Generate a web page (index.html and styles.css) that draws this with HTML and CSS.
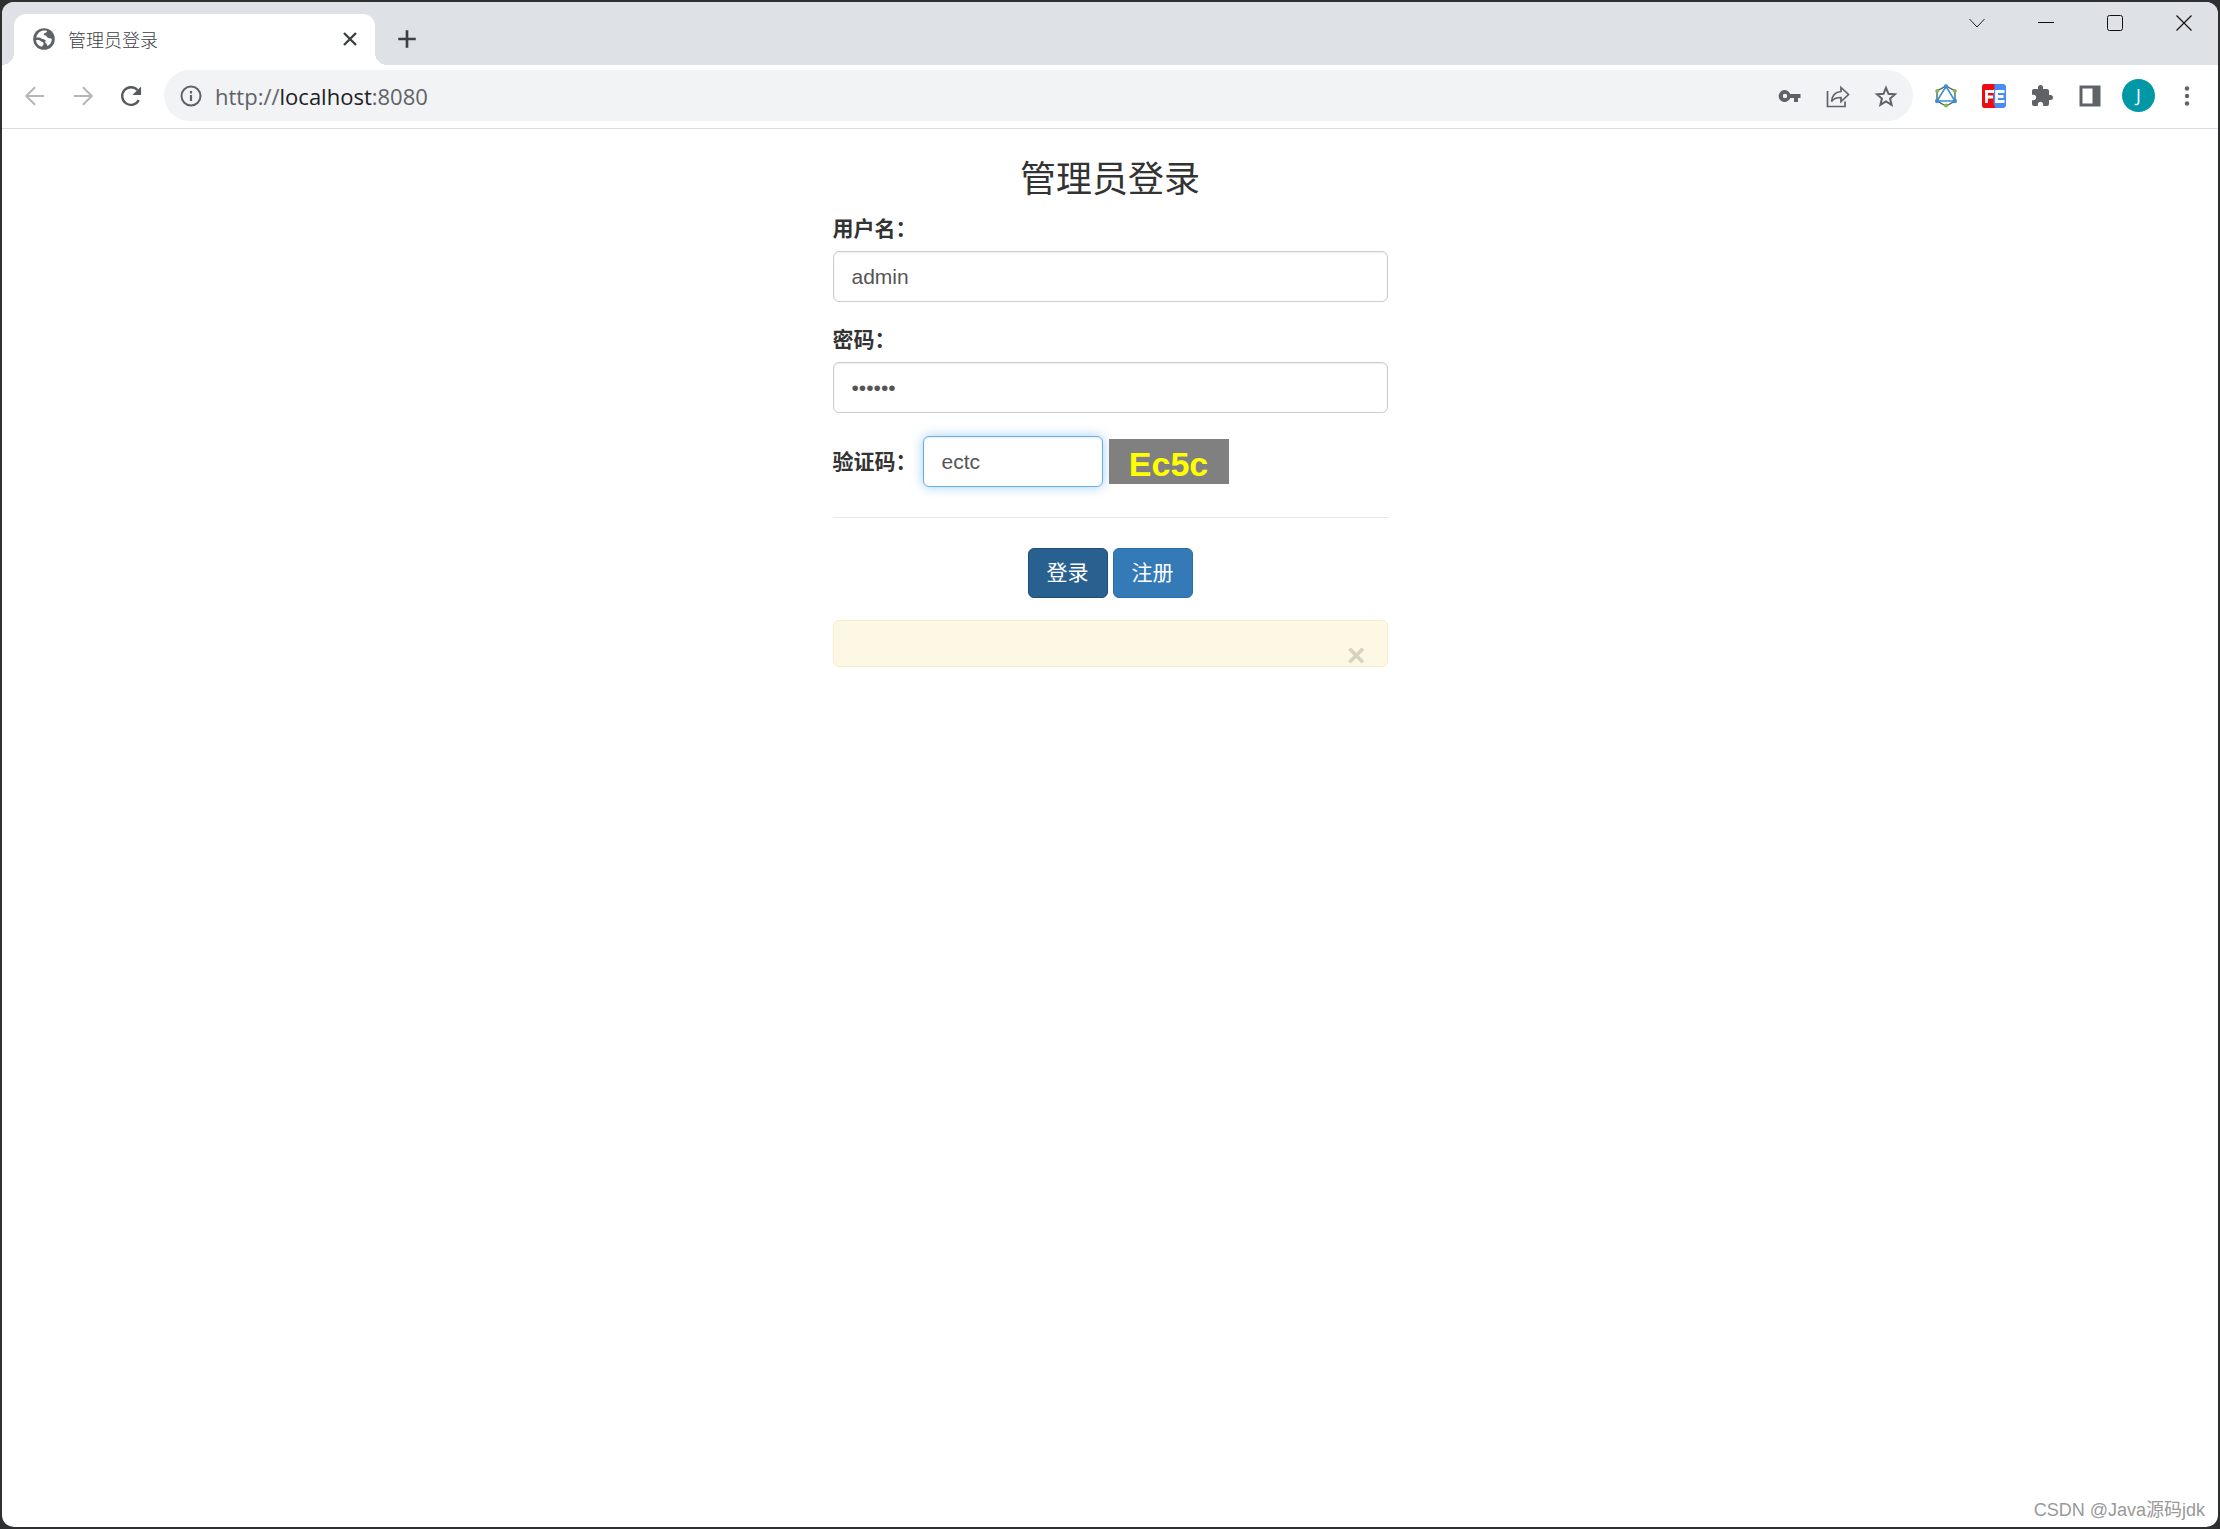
FILE: index.html
```html
<!DOCTYPE html>
<html lang="zh-CN">
<head>
<meta charset="utf-8">
<title>管理员登录</title>
<link rel="stylesheet" href="styles.css">
</head>
<body>
<div class="window">
  <header class="tabstrip">
    <div class="tab">
      <svg class="icon" viewBox="0 0 24 24" aria-hidden="true"><circle cx="12" cy="12" r="10.800" fill="#5f6368"/><path d="M9.500 4c1.800-.6 4-.6 5.500 0 .2 1.600-1.700 1.700-2.700 2.600-1 1-.2 2 1.200 2 1.500.1 1.200 1.800 2.300 2.200 1.400.4 2.700.2 4 1.200 0 3.200-1.600 5.600-4.300 6.900-.7-.8-.2-1.800-1.300-2.500-1.200-.7-1.100-2-.4-3-1-1.700-3.200-.8-4.400-2-1-1.200-3.300-1-5.200-.9C5 7.400 6.700 5 9.500 4z" fill="#fff"/><path d="M4 13.200c2.300-.3 3.900.1 4.900 1.100 1 1 3 1 2.800 2.400-.2 1.200-1.300 1.300-1.400 2.900C7 19.300 4.500 16.800 4 13.200z" fill="#fff"/></svg>
      <span class="tab-title">管理员登录</span>
      <button class="icon-btn" aria-label="关闭标签页"><svg class="icon" viewBox="0 0 24 24"><path d="M6 6l12 12M18 6L6 18" stroke="#3c4043" stroke-width="2.400"/></svg></button>
    </div>
    <button class="icon-btn new-tab" aria-label="新标签页"><svg class="icon" viewBox="0 0 24 24"><path d="M12 1.500v21M1.500 12h21" stroke="#3c4043" stroke-width="3.200"/></svg></button>
    <div class="window-controls">
      <button aria-label="搜索标签页"><svg class="icon" viewBox="0 0 24 24"><path d="M4.500 8l7.500 8 7.500-8" stroke="#222" fill="none"/></svg></button>
      <button aria-label="最小化"><svg class="icon" viewBox="0 0 24 24"><path d="M4 11.500h16" stroke="#111"/></svg></button>
      <button aria-label="最大化"><svg class="icon" viewBox="0 0 24 24"><rect x="4.500" y="4.500" width="15" height="15" rx="2" stroke="#111" fill="none"/></svg></button>
      <button aria-label="关闭"><svg class="icon" viewBox="0 0 24 24"><path d="M4.500 4.500l15 15M19.500 4.500l-15 15" stroke="#111" stroke-width="1.200"/></svg></button>
    </div>
  </header>
  <nav class="toolbar">
    <div class="nav-buttons">
      <button class="icon-btn" aria-label="后退"><svg class="icon" viewBox="0 0 24 24"><path d="M22 12H4M12 2.500L2.500 12l9.500 9.500" stroke="#b4b6b8" stroke-width="2.200" fill="none"/></svg></button>
      <button class="icon-btn" aria-label="前进"><svg class="icon" viewBox="0 0 24 24"><path d="M2 12h18M12 2.500l9.500 9.500-9.500 9.500" stroke="#b4b6b8" stroke-width="2.200" fill="none"/></svg></button>
      <button class="icon-btn" aria-label="刷新"><svg class="icon" viewBox="0 0 24 24"><path d="M20.500 16.500A9.600 9.600 0 1 1 19 5.500" stroke="#55585c" stroke-width="2.500" fill="none"/><path d="M23 1.500v9.500h-9.500z" fill="#55585c"/></svg></button>
    </div>
    <div class="omnibox">
      <svg class="icon" viewBox="0 0 24 24" aria-hidden="true"><circle cx="12" cy="12" r="9.500" stroke="#5f6368" stroke-width="2" fill="none"/><path d="M12 11v6M12 7v2.400" stroke="#5f6368" stroke-width="2.200"/></svg>
      <div class="url">http://<span class="host">localhost</span>:8080</div>
      <button class="icon-btn" aria-label="密码"><svg class="icon" viewBox="0 0 24 24"><path fill="#5f6368" fill-rule="evenodd" d="M12.300 10A6 6 0 1 0 12.300 14H16v4h4v-4h2.500v-4zM7 14.200a2.200 2.200 0 1 1 0-4.400 2.200 2.200 0 0 1 0 4.400z"/></svg></button>
      <button class="icon-btn" aria-label="分享"><svg class="icon" viewBox="0 0 24 24"><path d="M1.500 7v15.500h17.500v-5" stroke="#5f6368" stroke-width="1.700" fill="none"/><path d="M15 3.500l7.500 7-7.500 7v-4c-4.500 0-7.500 1-9.500 4 .5-5 3.500-9.500 9.500-10z" stroke="#5f6368" stroke-width="1.700" fill="none"/></svg></button>
      <button class="icon-btn" aria-label="收藏"><svg class="icon" viewBox="0 0 24 24"><path d="M12 3.800l2.500 6 6.500.6-4.900 4.200 1.500 6.300L12 17.500l-5.600 3.400 1.500-6.300L3 10.400l6.500-.6z" stroke="#5f6368" stroke-width="2" fill="none"/></svg></button>
    </div>
    <div class="extensions">
      <button class="icon-btn" aria-label="扩展程序 1"><svg class="icon" viewBox="0 0 24 24"><path d="M12 2l9 5v10l-9 5-9-5V7z" stroke="#54606a" stroke-width="1.400" fill="none"/><path d="M12 2.500L21 17H3z" stroke="#3b8fd4" stroke-width="1.600" fill="none"/><g fill="#3b8fd4"><circle cx="12" cy="2.500" r="2.200"/><circle cx="3.200" cy="17" r="2.200"/><circle cx="20.800" cy="17" r="2.200"/></g><g fill="#7cbd42"><circle cx="3.200" cy="7" r="2"/><circle cx="20.800" cy="7" r="2"/><circle cx="12" cy="21.500" r="2"/></g></svg></button>
      <button class="icon-btn" aria-label="FeHelper"><svg class="icon" viewBox="0 0 24 24"><rect width="24" height="24" rx="3" fill="#4a8cf7"/><path d="M3 0h9.500v5h-1v14l2 5H3a3 3 0 0 1-3-3V3a3 3 0 0 1 3-3z" fill="#ee0c12"/><path d="M4.500 19V7.500H12M4.500 13H11M22.500 7.500h-8v10h8M14.500 12.500h7" stroke="#fff" stroke-width="2.800" fill="none"/></svg></button>
      <button class="icon-btn" aria-label="扩展程序"><svg class="icon" viewBox="0 0 24 24"><path fill="#5f6368" d="M20.500 11H19V7c0-1.100-.9-2-2-2h-4V3.500a2.500 2.500 0 0 0-5 0V5H4c-1.100 0-1.990.9-1.990 2v3.800H3.500c1.490 0 2.700 1.210 2.700 2.700s-1.210 2.700-2.700 2.700H2V20c0 1.100.9 2 2 2h3.800v-1.500c0-1.490 1.210-2.700 2.700-2.700s2.700 1.210 2.700 2.700V22H17c1.100 0 2-.9 2-2v-4h1.500a2.500 2.500 0 0 0 0-5z"/></svg></button>
      <button class="icon-btn" aria-label="侧边栏"><svg class="icon" viewBox="0 0 24 24"><path fill="#5f6368" fill-rule="evenodd" d="M1.500 1.500h21v21h-21zM4.500 4.500v15h10v-15z"/></svg></button>
      <button class="avatar" aria-label="账户">J</button>
      <button class="icon-btn" aria-label="菜单"><svg class="icon" viewBox="0 0 24 24"><g fill="#5f6368"><circle cx="12" cy="4.500" r="2.200"/><circle cx="12" cy="12" r="2.200"/><circle cx="12" cy="19.500" r="2.200"/></g></svg></button>
    </div>
  </nav>
  <main class="page">
    <form class="login">
      <h3 class="title">管理员登录</h3>
      <div class="group">
        <label for="user">用户名：</label>
        <input class="control" id="user" type="text" value="admin">
      </div>
      <div class="group">
        <label for="password">密码：</label>
        <input class="control" id="password" type="password" value="123456">
      </div>
      <div class="inline-group">
        <label for="code">验证码：</label>
        <input class="control code" id="code" type="text" value="ectc">
        <a class="captcha" href="#">Ec5c</a>
      </div>
      <hr class="rule">
      <div class="actions">
        <button class="btn pressed" type="button">登录</button>
        <button class="btn" type="button">注册</button>
      </div>
      <div class="alert" role="alert">
        <button class="dismiss" type="button" aria-label="关闭提示">×</button>
      </div>
    </form>
    <div class="watermark">CSDN @Java源码jdk</div>
  </main>
</div>
</body>
</html>
```
FILE: styles.css
```css
* { box-sizing: border-box; }

body {
  margin: 0;
  padding: 2px;
  min-height: 100vh;
  display: flex;
  background: #2e2f30;
  font: 21px/30px "Liberation Sans", "Noto Sans CJK SC", sans-serif;
  color: #333;
}

button {
  border: 0;
  padding: 0;
  background: none;
  font: inherit;
  color: inherit;
}

.icon { display: block; width: 24px; height: 24px; flex: none; }
.icon-btn { width: 24px; height: 24px; flex: none; }

.window {
  flex: 1;
  display: flex;
  flex-direction: column;
  border-radius: 12px;
  overflow: hidden;
  background: #fff;
}

/* Tab strip */
.tabstrip {
  display: flex;
  height: 63px;
  padding-left: 12px;
  background: #dee1e6;
}

.tab {
  position: relative;
  display: flex;
  align-items: center;
  gap: 12px;
  width: 361px;
  margin-top: 12px;
  padding: 0 13px 2px 18px;
  border-radius: 12px 12px 0 0;
  background: #fff;
}

.tab::before,
.tab::after {
  content: "";
  position: absolute;
  bottom: 0;
  width: 12px;
  height: 12px;
}

.tab::before { left: -12px; background: radial-gradient(circle at 0 0, transparent 12px, #fff 12px); }
.tab::after { right: -12px; background: radial-gradient(circle at 100% 0, transparent 12px, #fff 12px); }

.tab-title {
  flex: 1;
  font: 18px/24px "Noto Sans CJK SC", sans-serif;
  font-weight: 300;
  color: #3c4043;
}

.new-tab { margin: 25px 0 0 20px; }
.new-tab .icon { padding: 2px; }

.window-controls { display: flex; margin-left: auto; }

.window-controls button {
  display: flex;
  justify-content: center;
  width: 69px;
  height: 42px;
  padding-top: 9px;
}

/* Toolbar */
.toolbar {
  display: flex;
  align-items: center;
  height: 64px;
  padding: 0 19px 2px 21px;
  border-bottom: 1px solid #dadce0;
}

.nav-buttons,
.extensions { display: flex; align-items: center; gap: 24px; }
.nav-buttons { margin-right: 21px; }
.extensions { margin-left: 21px; }
.nav-buttons .icon { padding: 1px; }

.omnibox {
  flex: 1;
  display: flex;
  align-items: center;
  gap: 24px;
  height: 51px;
  padding: 0 15px;
  border-radius: 26px;
  background: #f1f3f4;
}

.url {
  flex: 1;
  margin-left: -12px;
  font: 22px/30px "Open Sans", "Noto Sans", sans-serif;
  color: #5f6368;
}

.host { color: #202124; }

.avatar {
  width: 33px;
  height: 33px;
  margin: 0 -4px;
  border-radius: 50%;
  background: #0097a7;
  color: #fff;
  font: 18px/33px "Open Sans", sans-serif;
}

/* Login page */
.page {
  position: relative;
  flex: 1;
  padding: 31px 24px;
}

.login { width: 100%; max-width: 555px; margin: 0 auto; }

.title {
  margin: 0 0 14px;
  font: 36px/40px "Liberation Sans", "Noto Sans CJK SC", sans-serif;
  font-weight: 400;
  text-align: center;
}

.group { display: flex; flex-direction: column; gap: 7px; margin-bottom: 23px; }

label { font-weight: 700; line-height: 30px; }

.control {
  width: 100%;
  height: 51px;
  padding: 8px 18px;
  border: 1px solid #ccc;
  border-radius: 6px;
  background: #fff;
  box-shadow: inset 0 1px 2px rgba(0, 0, 0, .08);
  font: inherit;
  color: #555;
}

.inline-group { display: flex; align-items: center; gap: 6px; }

.code {
  width: 180px;
  border-color: #66afe9;
  box-shadow: inset 0 1px 2px rgba(0, 0, 0, .08), 0 0 12px rgba(102, 175, 233, .6);
}

.captcha {
  width: 120px;
  height: 45px;
  background: #808080;
  color: #ff0;
  font: 700 34px/50px "Liberation Sans", sans-serif;
  text-align: center;
  text-decoration: none;
}

.rule { margin: 30px 0; border: 0; border-top: 1px solid #e8e8e8; }

.actions { display: flex; justify-content: center; gap: 5px; }

.btn {
  width: 80px;
  height: 50px;
  border: 1px solid #2e6da4;
  border-radius: 6px;
  background: #337ab7;
  color: #fff;
}

.pressed {
  border-color: #204d74;
  background: #286090;
}

.alert {
  display: flex;
  justify-content: flex-end;
  height: 47px;
  margin-top: 22px;
  padding: 18px 21px 0;
  border: 1px solid #faebcc;
  border-radius: 6px;
  background: #fcf8e3;
}

.dismiss {
  height: 32px;
  color: #000;
  font-size: 32px;
  font-weight: 700;
  line-height: 32px;
  text-shadow: 0 1px 0 #fff;
  opacity: .15;
}

.watermark {
  position: absolute;
  right: 13px;
  bottom: 5px;
  font: 18px/24px "Liberation Sans", "Noto Sans CJK SC", sans-serif;
  color: #999;
}
```
